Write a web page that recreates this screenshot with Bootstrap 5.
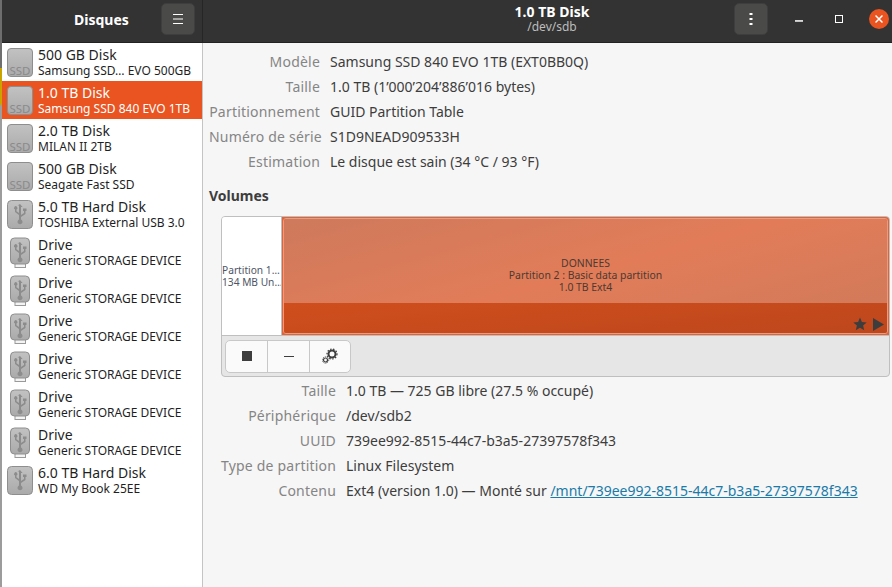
<!doctype html>
<html lang="fr"><head><meta charset="utf-8"><title>Disques</title>
<link href="https://cdn.jsdelivr.net/npm/bootstrap@5.3.0/dist/css/bootstrap.min.css" rel="stylesheet">
<style>
html,body{height:587px;overflow:hidden;background:#f6f6f6}
body{font-family:"Noto Sans",sans-serif;font-size:14px;color:#3d3d3d}
.shell{height:587px;width:892px}
.edge{width:2px;flex:none;background:linear-gradient(#6e6e6e 0,#6e6e6e 68px,#c9a300 68px,#c9a300 105px,#9c9c9c 105px,#9c9c9c 100%)}
.side{width:201px;flex:none;border-right:1px solid #c4c4c4}
.tb{height:43px;background:#333;color:#fff;border-bottom:1px solid #222;flex:none}
.tb-l{width:201px;flex:none;border-right:1px solid #262626;padding:0 7px 4px 72px}
.tb-t{font-weight:700;font-size:14px}
.hbtn{width:34px;height:32px;background:#4a4a49;border-radius:5px;border:1px solid #3e3e3e;flex:none}
.tb-r{padding:0 3px 4px 0}
.ttl{padding-left:167px}
.tt{font-size:14px;font-weight:700;line-height:16px}
.ts{font-size:12px;color:#bdbdbd;line-height:14px}
.wbtn{width:40px;flex:none}
.hbtn-m{margin-right:11px}
.minb{margin-top:3px}
.cls{width:20px;height:20px;border-radius:50%;background:#e95420;margin-left:10px;flex:none}
.dlist{background:#fff}
.ditem{height:38px;padding:0 0 0 3px;gap:5px;color:#1f1f1f;flex:none}
.ditem.sel{background:#e95420;color:#fff}
.ico{width:28px;height:31px;flex:none}
.dn{font-size:14px;line-height:17px;white-space:nowrap}
.dd{font-size:12px;line-height:15px;white-space:nowrap}
.main{flex:1 1 auto;min-width:0}
.infos{padding:6px 0 0 6px}
.vals{padding:1px 0 0 18px}
.lab{color:#858585;text-align:right;flex:none;font-size:14px;letter-spacing:.2px}
.rowi{height:25px;gap:10px;white-space:nowrap}
.l1{width:111px}
.l2{width:115px}
.vol{font-weight:700;font-size:14px;margin:13px 0 0 6px;height:18px;line-height:18px}
.vbox{margin:11px 2px 0 18px;border:1px solid #bfbfbf;border-radius:4px;background:#e6e6e6;overflow:hidden}
.parts{height:119px;border-bottom:1px solid #bfbfbf}
.p1{width:60px;background:#fff;border-right:1px solid #bfbfbf;font-size:10.2px;line-height:12px;color:#4d5566;white-space:nowrap;overflow:hidden;flex:none}
.p2{background:#df6439;position:relative;flex:1 1 auto;font-size:10.4px;line-height:12px;color:#4a3a33;padding:1px}
.p2in{border:1px solid #ee9a7c;border-radius:3px;overflow:hidden;flex:1 1 auto}
.p2top{height:84px;background:linear-gradient(165deg,#ce7a5c,#e27c58 55%,#d27a5a);padding-top:38px;flex:none}
.p2bot{flex:1;background:linear-gradient(175deg,#d04e1d,#bd471c)}
.marks{position:absolute;right:5px;bottom:4px;gap:6px}
.tools{height:40px;padding:0 3px}
.tgrp{height:33px;background:#fafafa;border:1px solid #c8c8c8;border-radius:5px}
.tbtn{width:42px;height:31px;border-right:1px solid #c8c8c8}
.tbtn:last-child{border-right:0;width:40px}
.lnk{color:#1a7ba8;text-decoration:underline}
.sq{width:10px;height:10px;background:#3d3d3d}
.dsh{width:10px;height:1px;background:#3d3d3d}
</style></head><body>
<svg width="0" height="0" class="d-block position-absolute"><defs>
<linearGradient id="g" x1="0" y1="0" x2="0" y2="1"><stop offset="0" stop-color="#c2c2c2"/><stop offset="1" stop-color="#aaa"/></linearGradient>
<symbol id="ssd" viewBox="0 0 28 31"><rect x="2.500" y="1.500" width="25" height="28" rx="3.500" fill="url(#g)" stroke="#8e8e8e"/><text x="15" y="27.500" text-anchor="middle" font-family="Noto Sans,sans-serif" font-size="11.500" fill="#8a8a8a">SSD</text></symbol>
<symbol id="usbm" viewBox="0 0 28 31"><path d="M15 5l2.500 3h-1.500v8l3-2v-2h-1v-2.500h3.500v2.500h-1v3l-4.500 3v2.500a2.500 2.500 0 1 1-2 0v-4.500l-4-3v-2.500a1.700 1.700 0 1 1 1.500 0v1.800l2.500 1.800v-7.600h-1.500z" fill="#8c8c8c"/></symbol>
<symbol id="hdd" viewBox="0 0 28 31"><rect x="2.500" y="1.500" width="25" height="28" rx="4" fill="url(#g)" stroke="#8e8e8e"/><use href="#usbm"/></symbol>
<symbol id="drv" viewBox="0 0 28 31"><rect x="10" y="26" width="10.500" height="4.500" fill="#f4f4f4" stroke="#9a9a9a"/><rect x="5.500" y="1" width="19" height="26" rx="4" fill="url(#g)" stroke="#8e8e8e"/><use href="#usbm"/></symbol>
</defs></svg>
<div class="shell d-flex">
<div class="edge"></div>
<div class="flex-grow-1 d-flex flex-column">
<div class="tb d-flex">
<div class="tb-l d-flex align-items-center justify-content-between"><span class="tb-t">Disques</span>
<div class="hbtn d-flex align-items-center justify-content-center"><svg width="12" height="10" viewBox="0 0 12 10"><path d="M1 .5h10M1 5h10M1 9.500h10" stroke="#fff"/></svg></div></div>
<div class="tb-r flex-grow-1 d-flex align-items-center">
<div class="ttl flex-grow-1 text-center"><div class="tt">1.0 TB Disk</div><div class="ts">/dev/sdb</div></div>
<div class="hbtn hbtn-m d-flex align-items-center justify-content-center"><svg width="4" height="12" viewBox="0 0 4 12"><path d="M.5 0h3v2h-3zM.5 5h3v2h-3zM.5 10h3v2h-3z" fill="#fff"/></svg></div>
<div class="wbtn d-flex justify-content-center"><svg class="minb" width="8" height="2"><rect width="8" height="1.500" y=".2" fill="#fff"/></svg></div>
<div class="wbtn d-flex justify-content-center"><svg width="8" height="8"><rect x=".5" y=".5" width="7" height="7" fill="none" stroke="#fff"/></svg></div>
<div class="cls d-flex align-items-center justify-content-center"><svg width="8" height="8" viewBox="0 0 8 8"><path d="M.5.500l7 7M7.500.500l-7 7" stroke="#fff" stroke-width="1.500"/></svg></div>
</div></div>
<div class="d-flex flex-grow-1">
<div class="side d-flex flex-column dlist">
<div class="ditem d-flex align-items-center"><svg class="ico"><use href="#ssd"/></svg><div><div class="dn">500 GB Disk</div><div class="dd">Samsung SSD… EVO 500GB</div></div></div>
<div class="ditem sel d-flex align-items-center"><svg class="ico"><use href="#ssd"/></svg><div><div class="dn">1.0 TB Disk</div><div class="dd">Samsung SSD 840 EVO 1TB</div></div></div>
<div class="ditem d-flex align-items-center"><svg class="ico"><use href="#ssd"/></svg><div><div class="dn">2.0 TB Disk</div><div class="dd">MILAN II 2TB</div></div></div>
<div class="ditem d-flex align-items-center"><svg class="ico"><use href="#ssd"/></svg><div><div class="dn">500 GB Disk</div><div class="dd">Seagate Fast SSD</div></div></div>
<div class="ditem d-flex align-items-center"><svg class="ico"><use href="#hdd"/></svg><div><div class="dn">5.0 TB Hard Disk</div><div class="dd">TOSHIBA External USB 3.0</div></div></div>
<div class="ditem d-flex align-items-center"><svg class="ico"><use href="#drv"/></svg><div><div class="dn">Drive</div><div class="dd">Generic STORAGE DEVICE</div></div></div>
<div class="ditem d-flex align-items-center"><svg class="ico"><use href="#drv"/></svg><div><div class="dn">Drive</div><div class="dd">Generic STORAGE DEVICE</div></div></div>
<div class="ditem d-flex align-items-center"><svg class="ico"><use href="#drv"/></svg><div><div class="dn">Drive</div><div class="dd">Generic STORAGE DEVICE</div></div></div>
<div class="ditem d-flex align-items-center"><svg class="ico"><use href="#drv"/></svg><div><div class="dn">Drive</div><div class="dd">Generic STORAGE DEVICE</div></div></div>
<div class="ditem d-flex align-items-center"><svg class="ico"><use href="#drv"/></svg><div><div class="dn">Drive</div><div class="dd">Generic STORAGE DEVICE</div></div></div>
<div class="ditem d-flex align-items-center"><svg class="ico"><use href="#drv"/></svg><div><div class="dn">Drive</div><div class="dd">Generic STORAGE DEVICE</div></div></div>
<div class="ditem d-flex align-items-center"><svg class="ico"><use href="#hdd"/></svg><div><div class="dn">6.0 TB Hard Disk</div><div class="dd">WD My Book 25EE</div></div></div>
</div>
<div class="main d-flex flex-column">
<div class="infos">
<div class="rowi d-flex align-items-center"><span class="lab l1">Modèle</span><span>Samsung SSD 840 EVO 1TB (EXT0BB0Q)</span></div>
<div class="rowi d-flex align-items-center"><span class="lab l1">Taille</span><span>1.0 TB (1’000’204’886’016 bytes)</span></div>
<div class="rowi d-flex align-items-center"><span class="lab l1">Partitionnement</span><span>GUID Partition Table</span></div>
<div class="rowi d-flex align-items-center"><span class="lab l1">Numéro de série</span><span>S1D9NEAD909533H</span></div>
<div class="rowi d-flex align-items-center"><span class="lab l1">Estimation</span><span>Le disque est sain (34 °C / 93 °F)</span></div>
</div>
<div class="vol">Volumes</div>
<div class="vbox">
<div class="parts d-flex">
<div class="p1 d-flex flex-column justify-content-center"><div>Partition 1…</div><div>134 MB Un…</div></div>
<div class="p2 d-flex text-center">
<div class="p2in d-flex flex-column">
<div class="p2top"><div>DONNEES</div><div>Partition 2 : Basic data partition</div><div>1.0 TB Ext4</div></div>
<div class="p2bot"></div></div>
<div class="marks d-flex align-items-center"><svg width="14" height="14" viewBox="0 0 14 14"><path d="M7 .5l1.900 4.500 4.800.4-3.600 3.200 1.100 4.700L7 10.800l-4.200 2.500 1.100-4.700L.3 5.400l4.800-.4z" fill="#3d3d3d"/></svg><svg width="11" height="13" viewBox="0 0 11 13"><path d="M0 0l11 6.500-11 6.500z" fill="#3d3d3d"/></svg></div>
</div></div>
<div class="tools d-flex align-items-center"><div class="tgrp d-flex">
<div class="tbtn d-flex align-items-center justify-content-center"><div class="sq"></div></div>
<div class="tbtn d-flex align-items-center justify-content-center"><div class="dsh"></div></div>
<div class="tbtn d-flex align-items-center justify-content-center"><svg width="16" height="16" viewBox="0 0 16 16"><circle cx="10" cy="6" r="3.500" fill="none" stroke="#3d3d3d" stroke-width="2"/><circle cx="10" cy="6" r="5" fill="none" stroke="#3d3d3d" stroke-width="1.200" stroke-dasharray="1.500 1.500"/><circle cx="3.500" cy="12" r="2" fill="none" stroke="#3d3d3d" stroke-width="1.200"/><circle cx="3.500" cy="12" r="3.200" fill="none" stroke="#3d3d3d" stroke-width=".9" stroke-dasharray="1 1"/></svg></div>
</div></div>
</div>
<div class="vals">
<div class="rowi d-flex align-items-center"><span class="lab l2">Taille</span><span>1.0 TB — 725 GB libre (27.5 % occupé)</span></div>
<div class="rowi d-flex align-items-center"><span class="lab l2">Périphérique</span><span>/dev/sdb2</span></div>
<div class="rowi d-flex align-items-center"><span class="lab l2">UUID</span><span>739ee992-8515-44c7-b3a5-27397578f343</span></div>
<div class="rowi d-flex align-items-center"><span class="lab l2">Type de partition</span><span>Linux Filesystem</span></div>
<div class="rowi d-flex align-items-center"><span class="lab l2">Contenu</span><span>Ext4 (version 1.0) — Monté sur <a class="lnk" href="#">/mnt/739ee992-8515-44c7-b3a5-27397578f343</a></span></div>
</div>
</div></div></div></div>
<script src="https://cdn.jsdelivr.net/npm/bootstrap@5.3.0/dist/js/bootstrap.bundle.min.js"></script>
</body></html>
